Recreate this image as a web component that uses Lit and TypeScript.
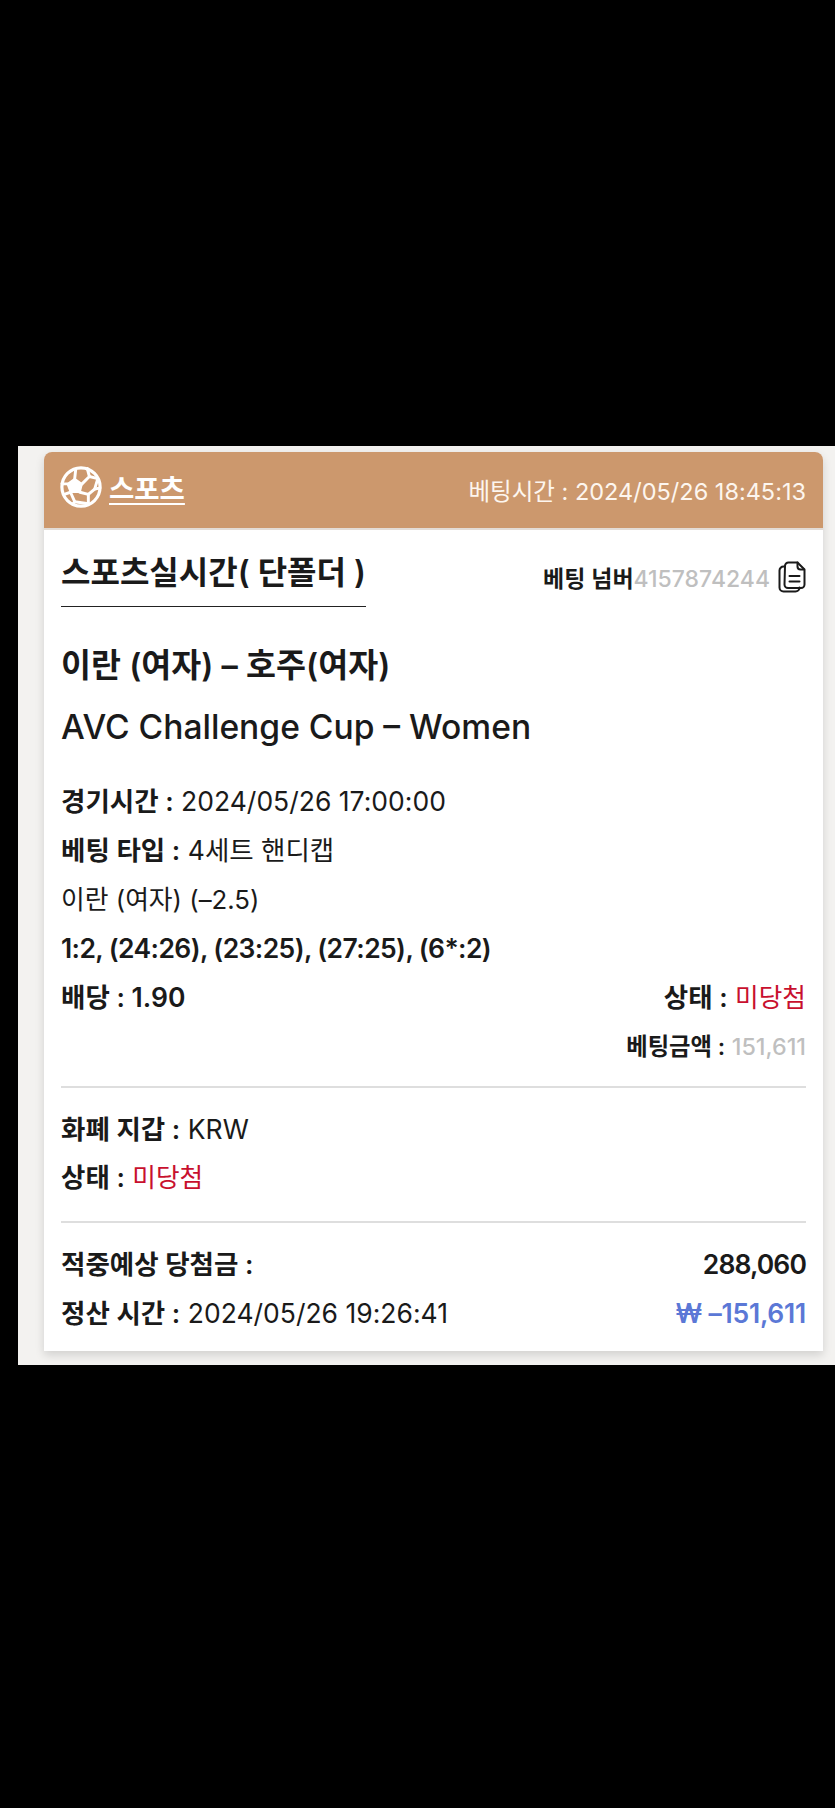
import { LitElement, html, css } from "lit";
import { customElement } from "lit/decorators.js";

@customElement("app-root")
export class AppRoot extends LitElement {
  static styles = css`
    :host {
      display: block;
      min-height: 1808px;
      box-sizing: border-box;
      background: #000;
      padding-top: 446px;
      font-family: "Inter", "Noto Sans CJK KR", sans-serif;
      color: #1a1a1a;
    }
    .panel {
      margin-left: 18px;
      background: #f3f2f0;
      padding: 6px 12px 14px 26px;
    }
    .card {
      background: #fff;
      border-radius: 8px 8px 0 0;
      box-shadow: 0 4px 10px rgba(0, 0, 0, 0.14);
    }
    .head {
      height: 76px;
      background: #cc986d;
      border-radius: 8px 8px 0 0;
      border-bottom: 2px solid #e3dcd6;
      display: flex;
      align-items: center;
      justify-content: space-between;
      padding: 0 17px 0 16px;
      color: #fff;
    }
    .brand {
      display: flex;
      align-items: center;
      gap: 7px;
      font-size: 27.5px;
      font-weight: 600;
      text-decoration: underline;
      text-underline-offset: 4px;
      margin-top: -6px;
    }
    .brand svg { width: 42px; height: 42px; display: block; }
    .time { font-size: 23.5px; color: #fdf6ef; }
    .body { padding: 0 17px; }
    .top {
      display: flex;
      justify-content: space-between;
      align-items: flex-start;
      padding-top: 19px;
    }
    .title {
      font-size: 32px;
      font-weight: 600;
      line-height: 48px;
      padding-bottom: 9px;
      border-bottom: 1px solid #222;
    }
    .num {
      display: flex;
      align-items: center;
      font-size: 23px;
      font-weight: 600;
      margin-top: 11px;
      gap: 8px;
    }
    .num i { font-style: normal; font-weight: 500; color: #bfbfbf; }
    .num svg { width: 28px; height: 32px; display: block; }
    .match {
      font-weight: 600;
      line-height: 62px;
      margin-top: 27px;
    }
    .m1 { font-size: 32.6px; }
    .m2 { font-size: 33.6px; font-weight: 500; }
    .rows { margin-top: 19px; padding-bottom: 15px; }
    .row {
      display: flex;
      justify-content: space-between;
      align-items: center;
      font-size: 26.5px;
      line-height: 49px;
      white-space: nowrap;
    }
    .sec .row { line-height: 48px; }
    .sec.last .row { line-height: 49px; }
    b { font-weight: 600; }
    .red { color: #c8102e; font-size: 25.7px; }
    .plain { font-size: 25.8px; }
    .small { font-size: 23.3px; }
    .grey { color: #bfbfbf; font-weight: 500; }
    .blue { color: #5b78d6; font-weight: 600; letter-spacing: -0.25px; }
    .rule { height: 2px; background: #dedede; }
    .sec { padding: 17px 0 19px; }
    .sec.last { padding-bottom: 13px; }
    .tight { letter-spacing: -0.6px; }
    .tighter { letter-spacing: -0.9px; }
  `;

  render() {
    return html`<div class="panel">
      <div class="card">
        <div class="head">
          <div class="brand">
            <svg viewBox="0 0 40 40" fill="none" stroke="#fff" stroke-linejoin="round" stroke-linecap="round">
              <circle cx="20" cy="20" r="18.200" stroke-width="3" />
              <path fill="#fff" stroke-width="1.600" d="M14 12l7 5-2 8h-9l-3-8z" />
              <g stroke-width="2.800">
                <path d="M14 12l1-9" />
                <path d="M21 17l7-7-2-7.500" />
                <path d="M28 10l8 2-3 10-6 5-8-2" />
                <path d="M33 22l5-1" />
                <path d="M27 27v9" />
                <path d="M10 25l4 9 13 2" />
                <path d="M14 34l-2 2.500" />
                <path d="M7 17h-5" />
                <path d="M10 25l-6 2" />
              </g>
            </svg>
            <span>스포츠</span>
          </div>
          <div class="time">베팅시간 : 2024/05/26 18:45:13</div>
        </div>
        <div class="body">
          <div class="top">
            <div class="title">스포츠실시간( 단폴더 )</div>
            <div class="num">
              <span><b>베팅 넘버</b><i>4157874244</i></span>
              <svg viewBox="0 0 28 32" fill="none" stroke="#1a1a1a" stroke-width="2" stroke-linejoin="round" stroke-linecap="round">
                <path d="M7 5.500h-1.500a4 4 0 0 0-4 4v17a4 4 0 0 0 4 4h12a4 4 0 0 0 4-4" />
                <path d="M7 5a3.500 3.500 0 0 1 3.500-3.500h9l7 7v15a3.500 3.500 0 0 1-3.500 3.500h-13a3.500 3.500 0 0 1-3.500-3.500z" />
                <path d="M19.500 1.500v4a3 3 0 0 0 3 3h3.500" />
                <path d="M11.500 15h10M11.500 20.500h10" />
              </svg>
            </div>
          </div>
          <div class="match">
            <div class="m1">이란 (여자) – 호주(여자)</div>
            <div class="m2">AVC Challenge Cup – Women</div>
          </div>
          <div class="rows">
            <div class="row"><span><b>경기시간 :</b> 2024/05/26 17:00:00</span></div>
            <div class="row"><span><b>베팅 타입 :</b> 4세트 핸디캡</span></div>
            <div class="row plain"><span>이란 (여자) (–2.5)</span></div>
            <div class="row"><b class="tight">1:2, (24:26), (23:25), (27:25), (6*:2)</b></div>
            <div class="row"><b>배당 : 1.90</b><span><b>상태 :</b> <span class="red">미당첨</span></span></div>
            <div class="row small"><span></span><span><b>베팅금액 :</b> <span class="grey">151,611</span></span></div>
          </div>
          <div class="rule"></div>
          <div class="sec">
            <div class="row"><span><b>화폐 지갑 :</b> KRW</span></div>
            <div class="row"><span><b>상태 :</b> <span class="red">미당첨</span></span></div>
          </div>
          <div class="rule"></div>
          <div class="sec last">
            <div class="row"><b>적중예상 당첨금 :</b><b class="tighter">288,060</b></div>
            <div class="row"><span><b>정산 시간 :</b> 2024/05/26 19:26:41</span><span class="blue">₩ –151,611</span></div>
          </div>
        </div>
      </div>
    </div>`;
  }
}
